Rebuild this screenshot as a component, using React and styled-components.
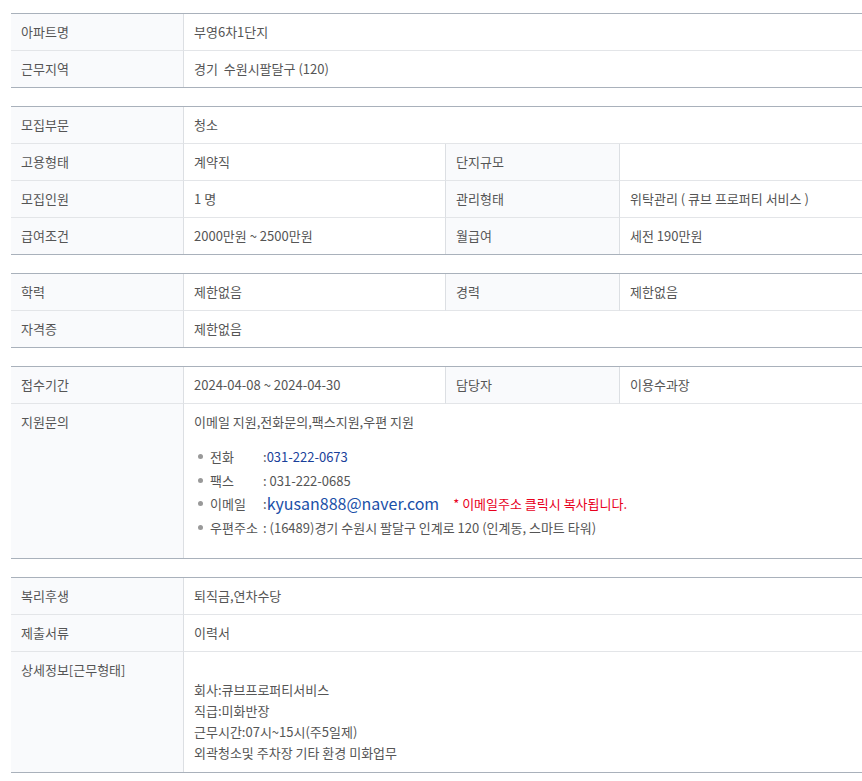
import React from 'react';
import styled, { createGlobalStyle } from 'styled-components';

const Global = createGlobalStyle`
  body { margin: 0; background: #fff; font-family: "Noto Sans CJK KR", "Noto Sans", sans-serif; font-size: 13px; color: #555; }
`

const Page = styled.div`
  padding: 13px 0 0 11px;
`

const Table = styled.div`
  display: grid;
  grid-template-columns: 173px 261px 175px 1fr;
  border-top: 1px solid #a9b1bb;
  border-bottom: 1px solid #a9b1bb;
  margin-bottom: 18px;
`

const Label = styled.div`
  background: #f9fafc;
  border-right: 1px solid #dcdfe3;
  border-left: ${(p) => (p.$mid ? '1px solid #dcdfe3' : 'none')};
  border-bottom: ${(p) => (p.$last ? 'none' : '1px solid #e3e5e8')};
  padding: 9px 10px;
  min-height: 18px;
  line-height: 18px;
`

const Value = styled.div`
  grid-column: ${(p) => (p.$wide ? 'span 3' : 'auto')};
  border-bottom: ${(p) => (p.$last ? 'none' : '1px solid #e3e5e8')};
  padding: 9px 10px;
  line-height: 18px;
  min-height: ${(p) => p.$min || 18}px;
`

const List = styled.ul`
  margin: 14px 0 0;
  padding: 0 0 0 4px;
  list-style: none;
`

const Item = styled.li`
  display: flex;
  align-items: center;
  line-height: 23.5px;
  &::before {
    content: "";
    width: 5px; height: 5px; border-radius: 50%;
    background: #999; margin-right: 7px;
  }
`

const Key = styled.span`
  width: 53px;
`

const Blue = styled.span`
  color: ${(p) => (p.$big ? '#1a4fa8' : '#1a3f9a')};
  font-size: ${(p) => (p.$big ? 16 : 13)}px;
`

const Red = styled.span`
  color: #e8001c;
  margin-left: 14px;
`

const Lines = styled.div`
  margin-top: 18px;
  line-height: 21px;
`

const Row4 = ({ a, b, c, d, last }) => (
  <>
    <Label $last={last}>{a}</Label>
    <Value $last={last}>{b}</Value>
    <Label $mid $last={last}>{c}</Label>
    <Value $last={last}>{d}</Value>
  </>
)

const Row2 = ({ a, children, last, min }) => (
  <>
    <Label $last={last}>{a}</Label>
    <Value $wide $last={last} $min={min}>{children}</Value>
  </>
)

export default function App() {
  return (
    <Page>
      <Global />
      <Table>
        <Row2 a="아파트명">부영6차1단지</Row2>
        <Row2 a="근무지역" last>경기&nbsp; 수원시팔달구 (120)</Row2>
      </Table>
      <Table>
        <Row2 a="모집부문">청소</Row2>
        <Row4 a="고용형태" b="계약직" c="단지규모" d="" />
        <Row4 a="모집인원" b="1 명" c="관리형태" d="위탁관리 ( 큐브 프로퍼티 서비스 )" />
        <Row4 a="급여조건" b="2000만원 ~ 2500만원" c="월급여" d="세전 190만원" last />
      </Table>
      <Table>
        <Row4 a="학력" b="제한없음" c="경력" d="제한없음" />
        <Row2 a="자격증" last>제한없음</Row2>
      </Table>
      <Table>
        <Row4 a="접수기간" b="2024-04-08 ~ 2024-04-30" c="담당자" d="이용수과장" />
        <Row2 a="지원문의" last min={136}>
          이메일 지원,전화문의,팩스지원,우편 지원
          <List>
            <Item><Key>전화</Key>:<Blue>031-222-0673</Blue></Item>
            <Item><Key>팩스</Key>: 031-222-0685</Item>
            <Item><Key>이메일</Key>:<Blue $big>kyusan888@naver.com</Blue><Red>* 이메일주소 클릭시 복사됩니다.</Red></Item>
            <Item><Key>우편주소</Key>: (16489)경기 수원시 팔달구 인계로 120 (인계동, 스마트 타워)</Item>
          </List>
        </Row2>
      </Table>
      <Table>
        <Row2 a="복리후생">퇴직금,연차수당</Row2>
        <Row2 a="제출서류">이력서</Row2>
        <Row2 a="상세정보[근무형태]" last>
          <Lines>
            회사:큐브프로퍼티서비스<br />
            직급:미화반장<br />
            근무시간:07시~15시(주5일제)<br />
            외곽청소및 주차장 기타 환경 미화업무
          </Lines>
        </Row2>
      </Table>
    </Page>
  )
}
